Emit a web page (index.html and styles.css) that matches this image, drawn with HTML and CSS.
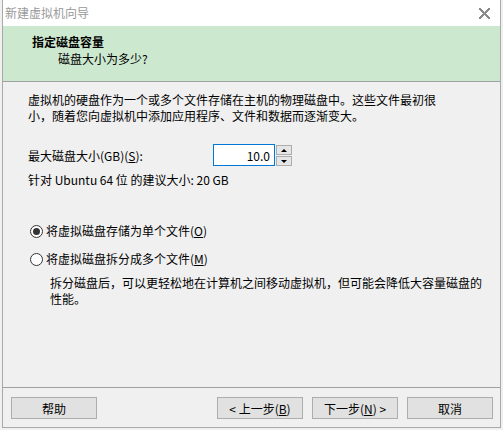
FILE: index.html
```html
<!DOCTYPE html>
<html>
<head>
  <title>新建虚拟机向导</title>
  <link rel="stylesheet" href="styles.css">
</head>
<body>
  <div class="window">
    <div class="titlebar">
      <span class="title">新建虚拟机向导</span>
      <span class="close-btn"><span class="close"></span></span>
    </div>

    <div class="header">
      <div class="header-title">指定磁盘容量</div>
      <div class="header-sub">磁盘大小为多少?</div>
    </div>

    <div class="content">
      <p class="intro">虚拟机的硬盘作为一个或多个文件存储在主机的物理磁盘中。这些文件最初很<br>小，随着您向虚拟机中添加应用程序、文件和数据而逐渐变大。</p>

      <div class="size-row">
        <label class="size-label" for="size">最大磁盘大小(GB)(<u>S</u>):</label>
        <div class="spin">
          <input type="text" id="size" class="spin-input" value="10.0">
          <div class="spin-buttons">
            <div class="spin-btn"><span class="arrow-up"></span></div>
            <div class="spin-btn"><span class="arrow-down"></span></div>
          </div>
        </div>
      </div>

      <div class="suggest">针对 Ubuntu 64 位 的建议大小: 20 GB</div>

      <div class="options">
        <div class="radio-row">
          <span class="radio checked"></span>
          <span>将虚拟磁盘存储为单个文件(<u>O</u>)</span>
        </div>
        <div class="radio-row">
          <span class="radio"></span>
          <span>将虚拟磁盘拆分成多个文件(<u>M</u>)</span>
        </div>
        <p class="radio-note">拆分磁盘后，可以更轻松地在计算机之间移动虚拟机，但可能会降低大容量磁盘的<br>性能。</p>
      </div>
    </div>

    <div class="footer">
      <button type="button" class="btn">帮助</button>
      <div class="btn-group">
        <button type="button" class="btn">&lt; 上一步(<u>B</u>)</button>
        <button type="button" class="btn">下一步(<u>N</u>) &gt;</button>
        <button type="button" class="btn">取消</button>
      </div>
    </div>
  </div>
</body>
</html>
```

FILE: styles.css
```css
body {
  margin: 0;
  background-color: #f0f0f0;
  font-family: "Noto Sans CJK SC", "Microsoft YaHei", sans-serif;
  font-size: 12px;
  color: #000;
}
.window {
  box-sizing: border-box;
  width: 499px;
  height: 428px;
  margin-left: 2px;
  border: 1px solid #a9a9a9;
  border-top: none;
  background-color: #f0f0f0;
  display: flex;
  flex-direction: column;
}
.titlebar {
  height: 26px;
  flex: none;
  background-color: #fff;
  display: flex;
  align-items: center;
  padding: 0 0 0 2px;
}
.title {
  flex: 1;
  color: #999;
  line-height: 26px;
}
.close-btn {
  flex: none;
  width: 21px;
  height: 26px;
  display: flex;
  align-items: center;
  justify-content: flex-start;
}
.close {
  display: block;
  width: 11px;
  height: 11px;
  background-image:
    linear-gradient(45deg, rgba(0,0,0,0) 45%, #8a8a8a 45%, #8a8a8a 55%, rgba(0,0,0,0) 55%),
    linear-gradient(135deg, rgba(0,0,0,0) 45%, #8a8a8a 45%, #8a8a8a 55%, rgba(0,0,0,0) 55%);
}
.header {
  height: 55px;
  flex: none;
  box-sizing: content-box;
  background-color: #cce8cf;
  border-bottom: 1px solid #a0a0a0;
  padding-left: 29px;
}
.header-title {
  font-weight: bold;
  line-height: 16px;
  margin-top: 8px;
}
.header-sub {
  line-height: 16px;
  margin-top: 1px;
  padding-left: 26px;
}
.content {
  flex: 1;
  padding-left: 25px;
}
.intro {
  margin: 10px 0 0;
  line-height: 16px;
}
.size-row {
  display: flex;
  align-items: center;
  margin-top: 20px;
  height: 22px;
}
.size-label {
  width: 185px;
  line-height: 16px;
  margin-top: 1px;
}
.spin {
  display: flex;
}
.spin-input {
  box-sizing: border-box;
  width: 62px;
  height: 22px;
  border: 1px solid #0078d7;
  background-color: #fff;
  font-family: inherit;
  font-size: 12px;
  text-align: right;
  padding: 0 4px 0 0;
  outline: none;
}
.spin-buttons {
  display: flex;
  flex-direction: column;
  justify-content: space-between;
  margin-left: 1px;
  height: 22px;
  padding-top: 1px;
  box-sizing: border-box;
}
.spin-btn {
  box-sizing: border-box;
  width: 16px;
  height: 10px;
  border: 1px solid #adadad;
  background-color: #e5e5e5;
  display: flex;
  align-items: center;
  justify-content: center;
}
.arrow-up {
  width: 0;
  height: 0;
  border-left: 3px solid transparent;
  border-right: 3px solid transparent;
  border-bottom: 3px solid #000;
}
.arrow-down {
  width: 0;
  height: 0;
  border-left: 3px solid transparent;
  border-right: 3px solid transparent;
  border-top: 3px solid #000;
}
.suggest {
  margin-top: 6px;
  line-height: 16px;
}
.options {
  margin-top: 35px;
}
.radio-row {
  display: flex;
  align-items: center;
  gap: 3px;
  line-height: 16px;
  padding-left: 2px;
}
.radio-row + .radio-row {
  margin-top: 12px;
}
.radio {
  box-sizing: border-box;
  width: 13px;
  height: 13px;
  border: 1px solid #333;
  border-radius: 50%;
  background-color: #fff;
  display: flex;
  align-items: center;
  justify-content: center;
}
.radio.checked::after {
  content: "";
  width: 7px;
  height: 7px;
  border-radius: 50%;
  background-color: #333;
}
.radio-note {
  margin: 8px 0 0 22px;
  line-height: 16px;
}
.footer {
  border-top: 1px solid #a0a0a0;
  box-sizing: border-box;
  height: 40px;
  flex: none;
  display: flex;
  align-items: flex-start;
  justify-content: space-between;
  padding: 9px 7px 0 8px;
}
.btn-group {
  display: flex;
  gap: 9px;
}
.btn {
  box-sizing: border-box;
  width: 86px;
  height: 22px;
  border: 1px solid #adadad;
  background-color: #e1e1e1;
  font-family: inherit;
  font-size: 12px;
  color: #000;
  padding: 0;
}
```
